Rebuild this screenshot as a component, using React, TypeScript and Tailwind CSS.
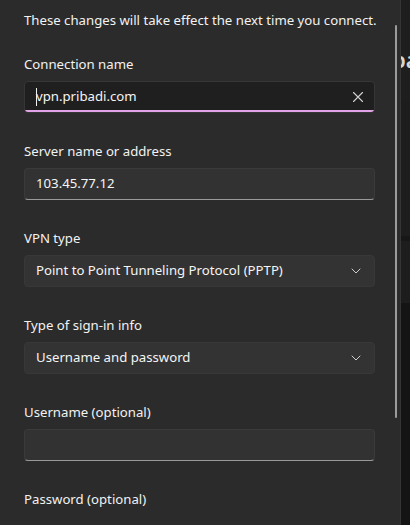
import React from "react";

const Chevron = () => (
  <svg width="10" height="6" viewBox="0 0 10 6" fill="none" className="shrink-0">
    <path d="M1 1l4 4 4-4" stroke="#cfcfcf" strokeWidth="1" strokeLinecap="round" strokeLinejoin="round" />
  </svg>
);

const Close = () => (
  <svg width="12" height="12" viewBox="0 0 12 12" fill="none" className="shrink-0">
    <path d="M1.5 1.5l9 9M10.5 1.5l-9 9" stroke="#d0d0d0" strokeWidth="1.1" strokeLinecap="round" />
  </svg>
);

function Field({ label, children }: { label: string; children?: React.ReactNode }) {
  return (
    <div className="flex flex-col">
      <div className="h-5 leading-5 text-[13.2px] text-[#f2f2f2]">{label}</div>
      {children && <div className="mt-[7px]">{children}</div>}
    </div>
  );
}

function Select({ value }: { value: string }) {
  return (
    <div className="h-8 rounded-[4px] bg-[#333333] border border-[#383838] flex items-center pl-[11px] pr-[13px] justify-between">
      <span className="text-[13.2px] text-[#f5f5f5]">{value}</span>
      <Chevron />
    </div>
  );
}

function TextBox({ value }: { value?: string }) {
  return (
    <div className="h-8 rounded-[4px] bg-[#323232] border border-[#3a3a3a] border-b-[#9a9a9a] flex items-center pl-[11px]">
      <span className="text-[13.2px] text-[#f5f5f5]">{value}</span>
    </div>
  );
}

export default function App() {
  return (
    <div
      className="w-[410px] h-[525px] flex overflow-hidden bg-[#1c1c1c]"
      style={{ fontFamily: '"Noto Sans", "Open Sans", sans-serif' }}
    >
      <div className="relative w-[401px] h-full bg-[#2b2b2b] border-r border-[#353535] shrink-0">
        <div className="pl-6 pr-[25px] pt-[10px] flex flex-col">
          <div className="h-5 leading-5 text-[13.2px] text-[#f2f2f2] whitespace-nowrap">
            These changes will take effect the next time you connect.
          </div>
          <div className="mt-6 flex flex-col gap-[28px]">
            <Field label="Connection name">
              <div className="relative h-8 rounded-[4px] bg-[#1f1f1f] border border-[#363636] flex items-center pl-[11px] pr-[10px] justify-between overflow-hidden">
                <span className="relative text-[13.2px] text-[#f5f5f5]">
                  <span className="absolute left-0 top-[1px] w-px h-[18px] bg-[#f0f0f0]" />
                  vpn.pribadi.com
                </span>
                <Close />
                <div className="absolute left-0 right-0 bottom-0 h-[2px] bg-[#e2a3e8]" />
              </div>
            </Field>
            <Field label="Server name or address">
              <TextBox value="103.45.77.12" />
            </Field>
            <Field label="VPN type">
              <Select value="Point to Point Tunneling Protocol (PPTP)" />
            </Field>
            <Field label="Type of sign-in info">
              <Select value="Username and password" />
            </Field>
            <Field label="Username (optional)">
              <TextBox />
            </Field>
            <Field label="Password (optional)" />
          </div>
        </div>
        <div className="absolute left-[395px] top-[25px] w-[2px] h-[393px] rounded-full bg-[#9b9b9b]" />
      </div>
      <div className="relative flex-1 h-full overflow-hidden">
        <div className="h-[100px] bg-[#1e1e1e]" />
        <div className="h-[136px] bg-[#1d1d1d]" />
        <div className="h-[5px] bg-[#171717]" />
        <div className="h-[62px] bg-[#1d1d1d]" />
        <div className="h-[222px] bg-[#141414]" />
        <span className="absolute top-[48px] left-[-9px] text-[22px] font-semibold text-[#d6d6d6] leading-none">
          pa
        </span>
      </div>
    </div>
  );
}
